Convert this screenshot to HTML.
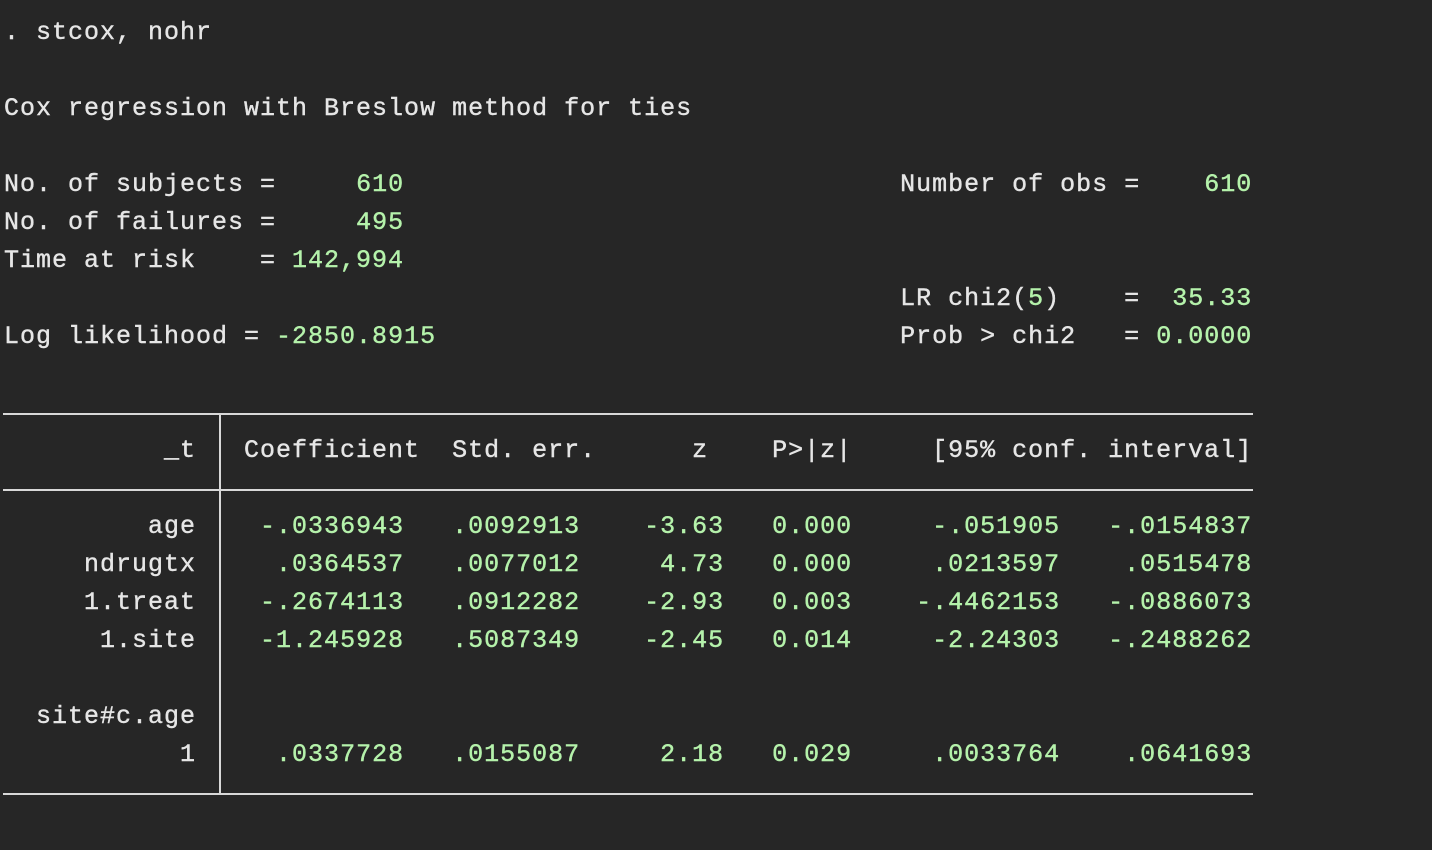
<!DOCTYPE html>
<html><head><meta charset="utf-8"><style>
html,body{margin:0;padding:0;background:#262626;width:1432px;height:850px;overflow:hidden}
pre{position:absolute;left:4px;top:14px;margin:0;font-family:"Liberation Mono",monospace;font-size:25px;letter-spacing:1px;line-height:38px;color:#e6e6e6;white-space:pre;-webkit-text-stroke:0.4px currentColor}
.g{color:#b5f2ab}
.h{position:absolute;left:3px;width:1250px;height:2px;background:#d8d8d8}
.v{position:absolute;left:219px;top:414px;width:2px;height:381px;background:#d8d8d8}
</style></head><body>
<pre>. stcox, nohr

Cox regression with Breslow method for ties

No. of subjects =     <span class="g">610</span>                               Number of obs =    <span class="g">610</span>
No. of failures =     <span class="g">495</span>
Time at risk    = <span class="g">142,994</span>
                                                        LR chi2(<span class="g">5</span>)    =  <span class="g">35.33</span>
Log likelihood = <span class="g">-2850.8915</span>                             Prob &gt; chi2   = <span class="g">0.0000</span>


          _t   Coefficient  Std. err.      z    P&gt;|z|     [95% conf. interval]

         age  <span class="g">  -.0336943   .0092913    -3.63   0.000     -.051905   -.0154837</span>
     ndrugtx  <span class="g">   .0364537   .0077012     4.73   0.000     .0213597    .0515478</span>
     1.treat  <span class="g">  -.2674113   .0912282    -2.93   0.003    -.4462153   -.0886073</span>
      1.site  <span class="g">  -1.245928   .5087349    -2.45   0.014     -2.24303   -.2488262</span>

  site#c.age
           1  <span class="g">   .0337728   .0155087     2.18   0.029     .0033764    .0641693</span>
</pre>
<div class="h" style="top:413px"></div>
<div class="h" style="top:489px"></div>
<div class="h" style="top:793px"></div>
<div class="v"></div>
</body></html>
